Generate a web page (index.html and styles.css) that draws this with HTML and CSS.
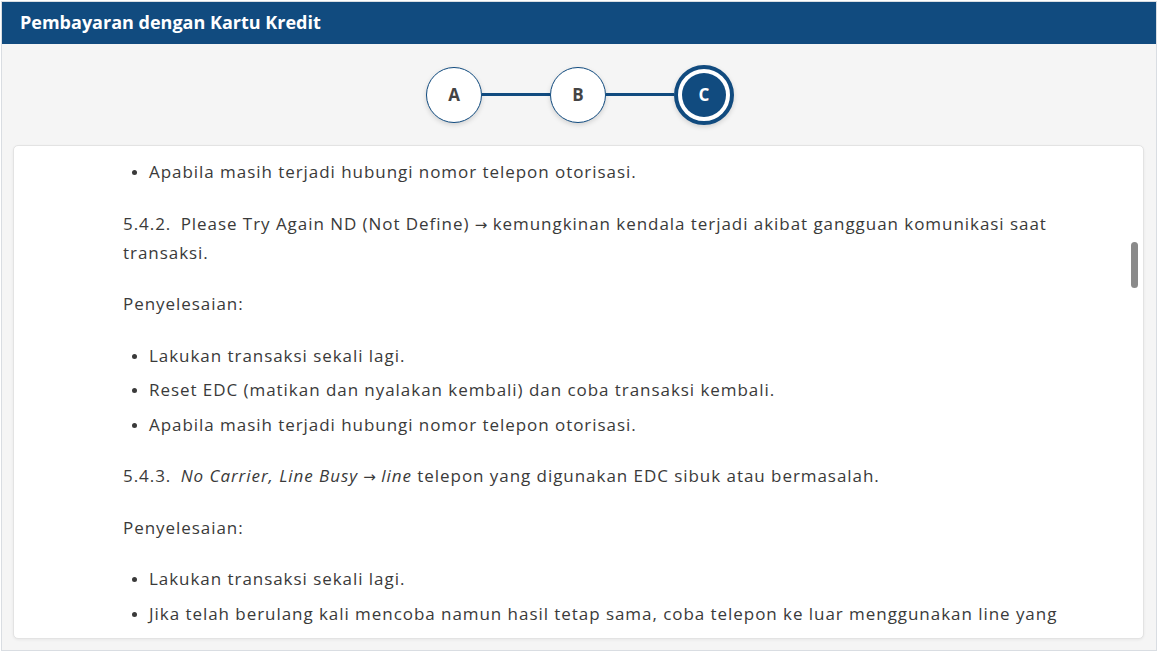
FILE: index.html
```html
<!DOCTYPE html>
<html>
<head>
<meta charset="utf-8">
<link rel="stylesheet" href="styles.css">
</head>
<body>
<div class="frame">
  <header class="header">Pembayaran dengan Kartu Kredit</header>
  <div class="steps">
    <div class="step">A</div>
    <div class="connector"></div>
    <div class="step">B</div>
    <div class="connector"></div>
    <div class="step active"><span>C</span></div>
  </div>
  <div class="card">
    <div class="scroll">
      <div class="content">
        <ul>
          <li>Apabila masih terjadi hubungi nomor telepon otorisasi.</li>
        </ul>
        <p><span class="num">5.4.2.</span> Please Try Again ND (Not Define) <span class="arrow">→</span> kemungkinan kendala terjadi akibat gangguan komunikasi saat transaksi.</p>
        <p>Penyelesaian:</p>
        <ul>
          <li>Lakukan transaksi sekali lagi.</li>
          <li>Reset EDC (matikan dan nyalakan kembali) dan coba transaksi kembali.</li>
          <li>Apabila masih terjadi hubungi nomor telepon otorisasi.</li>
        </ul>
        <p><span class="num">5.4.3.</span> <em>No Carrier, Line Busy <span class="arrow">→</span> line</em> telepon yang digunakan EDC sibuk atau bermasalah.</p>
        <p>Penyelesaian:</p>
        <ul>
          <li>Lakukan transaksi sekali lagi.</li>
          <li>Jika telah berulang kali mencoba namun hasil tetap sama, coba telepon ke luar menggunakan line yang digunakan oleh EDC.</li>
        </ul>
      </div>
    </div>
    <div class="thumb"></div>
  </div>
</div>
</body>
</html>
```
FILE: styles.css
```css
* { box-sizing: border-box; }
html, body { margin: 0; padding: 0; background: #fff; }
body { padding: 1px; }
.frame {
  width: 1156px;
  height: 650px;
  border: 1px solid #d9dde2;
  background: #f5f5f5;
  display: flex;
  flex-direction: column;
  overflow: hidden;
}
.header {
  height: 42px;
  flex: none;
  background: #114b7f;
  color: #fff;
  font-family: "Open Sans", sans-serif;
  font-weight: 700;
  font-size: 18px;
  line-height: 40px;
  padding-left: 18px;
}
.steps {
  height: 101px;
  flex: none;
  display: flex;
  align-items: center;
  justify-content: center;
  padding-left: 2px;
}
.step {
  width: 56px;
  height: 56px;
  border-radius: 50%;
  border: 1.5px solid #114b7f;
  background: #fff;
  display: flex;
  align-items: center;
  justify-content: center;
  font-family: "Open Sans", sans-serif;
  font-weight: 700;
  font-size: 17px;
  color: #444;
  box-shadow: 0 2px 5px rgba(0,0,0,0.15);
}
.connector {
  width: 68px;
  height: 3px;
  background: #114b7f;
}
.step.active {
  width: 60px;
  height: 60px;
  border: 4px solid #114b7f;
  padding: 4px;
}
.step.active span {
  width: 100%;
  height: 100%;
  border-radius: 50%;
  background: #114b7f;
  color: #fff;
  display: flex;
  align-items: center;
  justify-content: center;
}
.card {
  position: relative;
  flex: 1;
  min-height: 0;
  display: flex;
  flex-direction: column;
  margin: 0 12px 11px 11px;
  padding-bottom: 8px;
  background: #fff;
  border: 1px solid #e3e3e3;
  border-radius: 5px;
  box-shadow: 0 1px 3px rgba(0,0,0,0.06);
  overflow: hidden;
}
.scroll {
  flex: 1;
  min-height: 0;
  overflow: hidden;
}
.content {
  padding: 11px 60px 0 109px;
  font-family: "Open Sans", sans-serif;
  font-size: 17px;
  letter-spacing: 0.95px;
  line-height: 29px;
  color: #3a3a3a;
}
.content p { margin: 22.5px 0; }
.content ul { margin: 22.5px 0; padding-left: 26px; }
.content ul:first-child { margin-top: 0; }
.content li + li { margin-top: 5.5px; }
.content li::marker { font-size: 14px; }
.content em { font-style: italic; }
.num { display: inline-block; margin-right: 4px; }
.arrow { font-family: "DejaVu Sans", sans-serif; font-style: normal; font-size: 15px; line-height: 1; letter-spacing: 0; }
.thumb {
  position: absolute;
  right: 5px;
  top: 96px;
  width: 7px;
  height: 46px;
  border-radius: 4px;
  background: #8a8a8a;
}
```
